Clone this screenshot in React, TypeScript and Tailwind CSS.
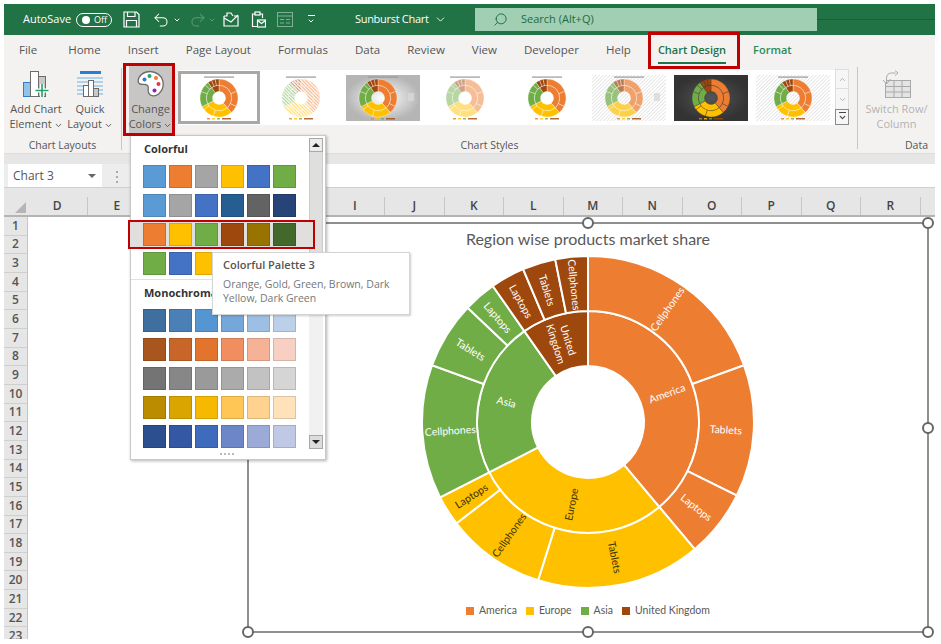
import { ChevronDown, Redo2, Search, Undo2 } from "lucide-react"

const tabs = ["File", "Home", "Insert", "Page Layout", "Formulas", "Data", "Review", "View", "Developer", "Help"]
const columns = ["D", "E", "F", "G", "H", "I", "J", "K", "L", "M", "N", "O", "P", "Q", "R"]
const rows = Array.from({ length: 23 }, (_, i) => i + 1)

const colorful = [
  ["#5B9BD5", "#ED7D31", "#A5A5A5", "#FFC000", "#4472C4", "#70AD47"],
  ["#5B9BD5", "#A5A5A5", "#4472C4", "#255E91", "#636363", "#264478"],
]
const hovered = ["#ED7D31", "#FFC000", "#70AD47", "#9E480E", "#997300", "#43682B"]
const lastColorful = ["#70AD47", "#4472C4", "#FFC000", "#43682B", "#255E91", "#997300"]
const mono = [
  ["#3f6f9f", "#4a80b5", "#5496d2", "#75a7db", "#9dbfe3", "#bdd0e9"],
  ["#a9561e", "#c8662a", "#e3742e", "#f08e60", "#f5b297", "#f8cfc3"],
  ["#747474", "#878787", "#9a9a9a", "#ababab", "#c2c2c2", "#d5d5d5"],
  ["#bb8c00", "#dba500", "#f6b900", "#ffc655", "#ffd38f", "#ffe1ba"],
  ["#2c4f8f", "#3458a3", "#3e6bbb", "#6c86c8", "#9caad8", "#bfc8e4"],
]

const ORANGE = "#ED7D31"
const GOLD = "#FFC000"
const GREEN = "#70AD47"
const BROWN = "#9E480E"

type Seg = { label: string; a0: number; a1: number; color: string; dark?: boolean }

const inner: Seg[] = [
  { label: "America", a0: 0, a1: 140, color: ORANGE },
  { label: "Europe", a0: 140, a1: 243, color: GOLD, dark: true },
  { label: "Asia", a0: 243, a1: 325, color: GREEN },
  { label: "United Kingdom", a0: 325, a1: 360, color: BROWN },
]
const outer: Seg[] = [
  { label: "Cellphones", a0: 0, a1: 70, color: ORANGE },
  { label: "Tablets", a0: 70, a1: 116.3, color: ORANGE },
  { label: "Laptops", a0: 116.3, a1: 140, color: ORANGE },
  { label: "Tablets", a0: 140, a1: 197.5, color: GOLD, dark: true },
  { label: "Cellphones", a0: 197.5, a1: 232.4, color: GOLD, dark: true },
  { label: "Laptops", a0: 232.4, a1: 243, color: GOLD, dark: true },
  { label: "Cellphones", a0: 243, a1: 290, color: GREEN },
  { label: "Tablets", a0: 290, a1: 313.5, color: GREEN },
  { label: "Laptops", a0: 313.5, a1: 325, color: GREEN },
  { label: "Laptops", a0: 325, a1: 337, color: BROWN },
  { label: "Tablets", a0: 337, a1: 348.6, color: BROWN },
  { label: "Cellphones", a0: 348.6, a1: 360, color: BROWN },
]

function polar(cx: number, cy: number, r: number, a: number) {
  const t = (a * Math.PI) / 180
  return [cx + r * Math.sin(t), cy - r * Math.cos(t)]
}

function wedge(cx: number, cy: number, r0: number, r1: number, a0: number, a1: number) {
  const [x0, y0] = polar(cx, cy, r1, a0)
  const [x1, y1] = polar(cx, cy, r1, a1)
  const [x2, y2] = polar(cx, cy, r0, a1)
  const [x3, y3] = polar(cx, cy, r0, a0)
  const large = a1 - a0 > 180 ? 1 : 0
  return `M${x0} ${y0}A${r1} ${r1} 0 ${large} 1 ${x1} ${y1}L${x2} ${y2}A${r0} ${r0} 0 ${large} 0 ${x3} ${y3}Z`
}

function SegLabel({ seg, r }: { seg: Seg; r: number }) {
  const mid = (seg.a0 + seg.a1) / 2
  const [x, y] = polar(168, 168, r, mid)
  let rot = mid - 90
  if (rot > 90) rot -= 180
  const fill = seg.dark ? "#3a3200" : "#ffffff"
  if (seg.label === "United Kingdom") {
    return (
      <text transform={`translate(${x} ${y}) rotate(${rot})`} textAnchor="middle" fontSize="10.5" fill={fill}>
        <tspan x="0" dy="-2">United</tspan>
        <tspan x="0" dy="13">Kingdom</tspan>
      </text>
    )
  }
  return (
    <text transform={`translate(${x} ${y}) rotate(${rot})`} textAnchor="middle" dominantBaseline="central" fontSize="10.5" fill={fill}>
      {seg.label}
    </text>
  )
}

function Sunburst() {
  return (
    <svg width="336" height="336" viewBox="0 0 336 336" className="font-['Lato',sans-serif] shrink-0">
      {[...inner.map((s) => ({ s, r0: 56, r1: 111 })), ...outer.map((s) => ({ s, r0: 111, r1: 166 }))].map(({ s, r0, r1 }, i) => (
        <path key={i} d={wedge(168, 168, r0, r1, s.a0, s.a1)} fill={s.color} stroke="#ffffff" strokeWidth="2" />
      ))}
      {inner.map((s) => (
        <SegLabel key={s.label} seg={s} r={84} />
      ))}
      {outer.map((s) => (
        <SegLabel key={s.label + s.a0} seg={s} r={138} />
      ))}
    </svg>
  )
}

type ThumbProps = {
  id: string
  bg: "white" | "stripes" | "gray" | "dark"
  pale?: number
  hatch?: boolean
  side?: boolean
}

function Thumb({ id, bg, pale = 0, hatch, side }: ThumbProps) {
  const cx = side ? 32 : 37
  const line = bg === "dark" ? "#3a3a3a" : "#ffffff"
  return (
    <svg width="74" height="46" viewBox="0 0 74 46" className="shrink-0">
      <defs>
        <pattern id={`bg-${id}`} width="2.5" height="2.5" patternUnits="userSpaceOnUse" patternTransform="rotate(45)">
          <rect width="2.5" height="2.5" fill="#ffffff" />
          <rect width="0.8" height="2.5" fill="#e2e2e2" />
        </pattern>
        <radialGradient id={`gray-${id}`}>
          <stop offset="0" stopColor={bg === "dark" ? "#555555" : "#ffffff"} />
          <stop offset="1" stopColor={bg === "dark" ? "#333333" : "#b5b5b5"} />
        </radialGradient>
        <pattern id={`hatch-${id}`} width="2.4" height="2.4" patternUnits="userSpaceOnUse" patternTransform="rotate(-45)">
          <rect width="1.2" height="2.4" fill="#ffffff" />
        </pattern>
      </defs>
      <rect
        width="74"
        height="46"
        fill={bg === "white" ? "#ffffff" : bg === "stripes" ? `url(#bg-${id})` : `url(#gray-${id})`}
      />
      {bg !== "dark" && <rect x="22" y="1.5" width="30" height="1.2" fill="#9a9a9a" />}
      {[...inner.map((s) => ({ s, r0: 6.5, r1: 12.7 })), ...outer.map((s) => ({ s, r0: 12.7, r1: 19 }))].map(({ s, r0, r1 }, i) => (
        <g key={i}>
          <path d={wedge(cx, 23, r0, r1, s.a0, s.a1)} fill={s.color} fillOpacity={1 - pale} stroke={line} strokeWidth="0.35" />
          {hatch && <path d={wedge(cx, 23, r0, r1, s.a0, s.a1)} fill={`url(#hatch-${id})`} />}
        </g>
      ))}
      <rect x="25" y="43.2" width="3" height="1.2" fill={ORANGE} />
      <rect x="30" y="43.2" width="3" height="1.2" fill={GOLD} />
      <rect x="35" y="43.2" width="3" height="1.2" fill={GREEN} />
      <rect x="40" y="43.2" width="9" height="1.2" fill={BROWN} />
      {side && <rect x="62" y="18" width="6" height="8" fill="#d8d8d8" fillOpacity="0.8" />}
    </svg>
  )
}

function AddChartIcon() {
  return (
    <svg width="28" height="28" viewBox="0 0 28 28" fill="none">
      <rect x="1.5" y="12.5" width="7" height="14" fill="#8fc3ea" stroke="#2b7cd3" />
      <rect x="8.5" y="1.5" width="8" height="25" fill="#fff" stroke="#6b6b6b" />
      <rect x="16.5" y="6.5" width="7" height="20" fill="#c8c8c8" stroke="#6b6b6b" />
      <path d="M20 14v13M13.5 20.5h13" stroke="#fff" strokeWidth="4" />
      <path d="M20 14v13M13.5 20.5h13" stroke="#21a366" strokeWidth="1.6" />
    </svg>
  )
}

function QuickLayoutIcon() {
  return (
    <svg width="28" height="28" viewBox="0 0 28 28" fill="none">
      <rect x="4" y="1" width="21" height="3" fill="#2b7cd3" />
      <path d="M1 8h26M1 12h26M1 16h26M1 20h26M1 24h26" stroke="#6fb0e4" strokeWidth="1" />
      <rect x="7.5" y="15.5" width="5" height="11" fill="#fff" stroke="#6b6b6b" />
      <rect x="12.5" y="10.5" width="5" height="16" fill="#fff" stroke="#6b6b6b" />
      <rect x="17.5" y="18.5" width="5" height="8" fill="#c8c8c8" stroke="#6b6b6b" />
    </svg>
  )
}

function PaletteIcon() {
  return (
    <svg width="28" height="28" viewBox="0 0 28 28" fill="none">
      <path
        d="M13 1.5C6 1.5 1.2 6.5 1.2 11c0 3 2.4 3.6 5 3.4 2.8-.2 4.6.4 5 2.6.4 2.4-.8 4.2.8 6.6 1.7 2.6 6.2 3.4 9.6.4 3.6-3.2 5.2-8.4 4.2-13-1.2-5.6-6.8-9.5-12.8-9.5Z"
        fill="#fff"
        stroke="#6b6b6b"
        strokeWidth="1.3"
      />
      <circle cx="7.5" cy="9.5" r="2" fill="#2b7cd3" />
      <circle cx="12.5" cy="6" r="2" fill="#21a366" />
      <circle cx="19" cy="8" r="2" fill="#ed7d31" />
      <circle cx="21.5" cy="14" r="2" fill="#e8344a" />
      <circle cx="17.5" cy="20.5" r="2" fill="#8e24aa" />
    </svg>
  )
}

function SwitchIcon() {
  return (
    <svg width="30" height="28" viewBox="0 0 30 28" fill="none" stroke="#a9a9a9">
      <rect x="3.5" y="10.5" width="25" height="17" fill="#e4e4e4" />
      <path d="M3.5 16.5h25M3.5 22h25M12 10.5v17M20 10.5v17" />
      <path d="M1 10l3.5 4 4-5M4.5 14V8c0-3 2-5 5-5h4M13 .5 16 3l-3 2.5" fill="#f3f2f1" />
    </svg>
  )
}

function FloppyIcon() {
  return (
    <svg width="17" height="17" viewBox="0 0 17 17" fill="none" stroke="#fff" strokeWidth="1.2">
      <path d="M1 1h12.5L16 3.5V16H1Z" />
      <path d="M4.5 1v4.5h7.5V1" />
      <path d="M3.5 16V9.5h10V16" />
    </svg>
  )
}

function MailBoxIcon() {
  return (
    <svg width="16" height="15" viewBox="0 0 16 15" fill="none" stroke="#fff" strokeWidth="1.2">
      <path d="M1 4v10h14V4h-4" />
      <path d="M1 4h3V1h4l2 3" />
      <path d="m1 6 7 4 7-7" />
    </svg>
  )
}

function ClipMailIcon() {
  return (
    <svg width="15" height="17" viewBox="0 0 15 17" fill="none" stroke="#fff" strokeWidth="1.2">
      <path d="M6 15.5H1.5V3h2.5M9 3h2.5v4" />
      <rect x="4" y="1" width="5" height="3" />
      <rect x="6.5" y="9" width="8" height="7" />
      <path d="m6.5 9.5 4 3 4-3" />
    </svg>
  )
}

function FormIcon() {
  return (
    <svg width="16" height="15" viewBox="0 0 16 15" fill="none" stroke="#7fae95" strokeWidth="1">
      <rect x="0.5" y="0.5" width="15" height="14" />
      <path d="M0.5 4h15M3 7.5h4M9 7.5h4M3 11h4M9 11h4" />
    </svg>
  )
}

function Swatch({ color }: { color: string }) {
  return <div className="w-[23px] h-[23px] shrink-0 border border-[#00000022]" style={{ backgroundColor: color }} />
}

function SwatchRow({ colors }: { colors: string[] }) {
  return (
    <div className="flex gap-[3px]">
      {colors.map((c, i) => (
        <Swatch key={i} color={c} />
      ))}
    </div>
  )
}

function Caret() {
  return <ChevronDown className="inline-block w-[9px] h-[9px] ml-[2px]" strokeWidth={2.5} />
}

function RibbonButton({ label1, label2, caret, className, children }: { label1: string; label2: string; caret?: boolean; className?: string; children: React.ReactNode }) {
  return (
    <div className={`flex flex-col items-center text-[11px] leading-[15px] ${className ?? ""}`}>
      <div className="h-[28px] mt-[5px] mb-[3px] flex items-center justify-center">{children}</div>
      <span className="whitespace-nowrap">{label1}</span>
      <span className="whitespace-nowrap">
        {label2}
        {caret && <Caret />}
      </span>
    </div>
  )
}

export default function App() {
  return (
    <div className="relative w-[941px] h-[644px] overflow-hidden bg-white pl-[4px] pr-[6px] pt-[4px] flex flex-col font-['Open_Sans',sans-serif]">
      {/* title bar */}
      <div className="h-[31px] shrink-0 bg-[#217346] flex items-center text-white text-[11px]">
        <span className="ml-[19px] w-[53px]">AutoSave</span>
        <div className="w-[36px] h-[14px] rounded-full border border-white flex items-center pl-[5px] gap-[4px]">
          <div className="w-[8px] h-[8px] rounded-full bg-white" />
          <span className="text-[9px] leading-none">Off</span>
        </div>
        <div className="ml-[11px] flex">
          <FloppyIcon />
        </div>
        <Undo2 className="ml-[11px] w-[20px] h-[18px]" strokeWidth={1.4} />
        <ChevronDown className="ml-[2px] w-[8px] h-[8px]" strokeWidth={3} />
        <Redo2 className="ml-[7px] w-[20px] h-[18px] text-[#5c9a79]" strokeWidth={1.4} />
        <ChevronDown className="w-[8px] h-[8px] text-[#5c9a79]" strokeWidth={3} />
        <div className="ml-[7px] flex">
          <MailBoxIcon />
        </div>
        <div className="ml-[12px] flex">
          <ClipMailIcon />
        </div>
        <div className="ml-[11px] flex">
          <FormIcon />
        </div>
        <div className="ml-[14px] w-[8px] flex flex-col items-center gap-[1px]">
          <div className="w-[7px] h-[1px] bg-white" />
          <ChevronDown className="w-[8px] h-[8px]" strokeWidth={3} />
        </div>
        <div className="ml-[40px] w-[120px] flex items-center gap-[5px] text-[11px] tracking-[-0.3px]">
          Sunburst Chart
          <ChevronDown className="w-[13px] h-[13px]" strokeWidth={1.6} />
        </div>
        <div className="w-[342px] h-[23px] bg-[#a0cfb4] flex items-center text-[#1e6b40]">
          <Search className="ml-[18px] w-[15px] h-[15px] -scale-x-100" strokeWidth={1.5} />
          <span className="ml-[13px] text-[11px]">Search (Alt+Q)</span>
        </div>
        <div className="flex-1 h-[1px] bg-[#1a5f39]" />
      </div>

      {/* tabs */}
      <div className="h-[30px] shrink-0 bg-[#f3f2f1] flex items-center gap-[27px] pl-[15px] text-[11.5px] text-[#555555]">
        {tabs.map((t) => (
          <span key={t} className={t === "File" ? "whitespace-nowrap mr-[4px]" : "whitespace-nowrap"}>{t}</span>
        ))}
        <span className="relative whitespace-nowrap font-semibold text-[11px] text-[#217346]">
          Chart Design
          <span className="absolute left-0 right-0 top-[20px] h-[2px] bg-[#217346]" />
        </span>
        <span className="whitespace-nowrap font-semibold text-[11px] text-[#2f8a5a]">Format</span>
      </div>

      {/* ribbon */}
      <div className="h-[88px] shrink-0 bg-[#f3f2f1] flex">
        <div className="w-[117px] flex flex-col">
          <div className="flex-1 flex pl-[6px] text-[#555555]">
            <RibbonButton label1="Add Chart" label2="Element" caret className="w-[52px]">
              <AddChartIcon />
            </RibbonButton>
            <RibbonButton label1="Quick" label2="Layout" caret className="ml-[6px] w-[44px]">
              <QuickLayoutIcon />
            </RibbonButton>
          </div>
          <div className="h-[17px] pt-[2px] text-center text-[10.5px] text-[#555555]">Chart Layouts</div>
        </div>
        <div className="w-[1px] h-[82px] mt-[3px] bg-[#c8c6c4]" />
        <div className="w-[735px] flex flex-col">
          <div className="flex-1 flex">
            <div className="ml-[7px] w-[43px] h-[70px] bg-[#c8c6c4] text-[#555555]">
              <RibbonButton label1="Change" label2="Colors" caret className="w-full">
                <PaletteIcon />
              </RibbonButton>
            </div>
            <div className="ml-[6px] mt-[5px] w-[657px] h-[55px] bg-white flex items-center">
              <div className="w-[82px] h-[53px] shrink-0 border-[3px] border-[#a8a8a8] flex items-center justify-center">
                <Thumb id="a" bg="white" />
              </div>
              <div className="w-[82px] shrink-0 flex justify-center">
                <Thumb id="b" bg="white" pale={0.45} hatch />
              </div>
              <div className="w-[82px] shrink-0 flex justify-center">
                <Thumb id="c" bg="gray" side />
              </div>
              <div className="w-[82px] shrink-0 flex justify-center">
                <Thumb id="d" bg="white" pale={0.5} />
              </div>
              <div className="w-[82px] shrink-0 flex justify-center">
                <Thumb id="e" bg="white" />
              </div>
              <div className="w-[82px] shrink-0 flex justify-center">
                <Thumb id="f" bg="stripes" pale={0.3} side />
              </div>
              <div className="w-[82px] shrink-0 flex justify-center">
                <Thumb id="g" bg="dark" />
              </div>
              <div className="w-[82px] shrink-0 flex justify-center">
                <Thumb id="h" bg="stripes" />
              </div>
            </div>
            <div className="mt-[4px] w-[14px] h-[56px] flex flex-col text-[#a0a0a0]">
              <div className="h-[20px] border border-[#dddddd] bg-[#f6f6f6] flex items-center justify-center">
                <ChevronDown className="w-[9px] h-[9px] rotate-180" />
              </div>
              <div className="h-[20px] border-x border-[#dddddd] bg-[#f6f6f6] flex items-center justify-center">
                <ChevronDown className="w-[9px] h-[9px]" />
              </div>
              <div className="h-[16px] border border-[#8a8a8a] bg-[#f6f6f6] flex flex-col items-center justify-center text-[#444444]">
                <div className="w-[7px] h-[1px] bg-[#444444]" />
                <ChevronDown className="w-[9px] h-[9px]" strokeWidth={3} />
              </div>
            </div>
          </div>
          <div className="h-[17px] pt-[2px] text-center text-[10.5px] text-[#555555]">Chart Styles</div>
        </div>
        <div className="w-[1px] h-[82px] mt-[2px] bg-[#c8c6c4]" />
        <div className="flex-1 flex flex-col">
          <div className="flex-1 flex justify-center text-[#b3b3b3]">
            <RibbonButton label1="Switch Row/" label2="Column" className="text-[10.5px]">
              <SwitchIcon />
            </RibbonButton>
          </div>
          <div className="h-[17px] pt-[2px] text-right pr-[7px] text-[10.5px] text-[#555555]">Data</div>
        </div>
      </div>

      {/* band under ribbon and formula bar */}
      <div className="h-[11px] shrink-0 bg-[#e6e6e6] border-t border-[#dcdcdc]" />
      <div className="h-[23px] shrink-0 bg-white flex">
        <div className="w-[130px] bg-[#ededed] flex">
          <div className="ml-[4px] w-[94px] bg-white flex items-center justify-between pl-[5px] pr-[6px] text-[12px] text-[#555555]">
            Chart 3
            <div className="w-0 h-0 border-x-[4px] border-x-transparent border-t-[4px] border-t-[#666666]" />
          </div>
          <div className="ml-[14px] mt-[7px] flex flex-col gap-[3px]">
            <div className="w-[2px] h-[2px] bg-[#aaaaaa]" />
            <div className="w-[2px] h-[2px] bg-[#aaaaaa]" />
            <div className="w-[2px] h-[2px] bg-[#aaaaaa]" />
          </div>
        </div>
      </div>

      {/* column headers */}
      <div className="h-[30px] shrink-0 bg-[#e6e6e6] border-t border-[#cfcfcf] border-b-2 border-b-[#b4b4b4] flex items-end overflow-hidden">
        <div className="w-[24px] h-full shrink-0 flex items-end justify-end pr-[2px] pb-[2px]">
          <div className="w-0 h-0 border-l-[11px] border-l-transparent border-b-[11px] border-b-[#b5b5b5]" />
        </div>
        {columns.map((c) => (
          <div key={c} className="w-[59.5px] h-[18px] shrink-0 border-r border-[#c6c6c6] flex items-center justify-center text-[12px] font-semibold text-[#444444]">
            {c}
          </div>
        ))}
      </div>

      {/* row headers */}
      <div className="flex-1 min-h-0 mb-[5px] flex overflow-hidden">
        <div className="w-[24px] shrink-0 bg-[#e6e6e6] border-r border-[#c6c6c6]">
          {rows.map((r) => (
            <div key={r} className="h-[18.66px] border-b border-[#cfcfcf] flex items-center justify-center text-[12px] font-semibold text-[#555555]">
              {r}
            </div>
          ))}
        </div>
        <div className="flex-1 bg-white" />
      </div>

      {/* chart object */}
      <div className="absolute left-[247px] top-[222px] w-[682px] h-[411px] border-2 border-[#8f8f8f] bg-white flex flex-col items-center">
        <div className="h-[30px] shrink-0 pt-[2px] text-[16px] leading-[26px] text-[#595959] font-['Lato',sans-serif]">
          Region wise products market share
        </div>
        <Sunburst />
        <div className="mt-[13px] flex items-center text-[10.5px] text-[#595959] font-['Lato',sans-serif]">
          <div className="w-[8px] h-[8px] bg-[#ED7D31] mr-[5px]" />
          <span className="mr-[9px]">America</span>
          <div className="w-[8px] h-[8px] bg-[#FFC000] mr-[5px]" />
          <span className="mr-[9px]">Europe</span>
          <div className="w-[8px] h-[8px] bg-[#70AD47] mr-[5px]" />
          <span className="mr-[9px]">Asia</span>
          <div className="w-[8px] h-[8px] bg-[#9E480E] mr-[5px]" />
          <span>United Kingdom</span>
        </div>
        <div className="absolute left-[-7px] top-[-7px] w-[12px] h-[12px] rounded-full border-2 border-[#666666] bg-white" />
        <div className="absolute left-[333px] top-[-7px] w-[12px] h-[12px] rounded-full border-2 border-[#666666] bg-white" />
        <div className="absolute right-[-7px] top-[-7px] w-[12px] h-[12px] rounded-full border-2 border-[#666666] bg-white" />
        <div className="absolute right-[-7px] top-[198px] w-[12px] h-[12px] rounded-full border-2 border-[#666666] bg-white" />
        <div className="absolute left-[-7px] bottom-[-7px] w-[12px] h-[12px] rounded-full border-2 border-[#666666] bg-white" />
        <div className="absolute left-[333px] bottom-[-7px] w-[12px] h-[12px] rounded-full border-2 border-[#666666] bg-white" />
        <div className="absolute right-[-7px] bottom-[-7px] w-[12px] h-[12px] rounded-full border-2 border-[#666666] bg-white" />
      </div>

      {/* change colors menu */}
      <div className="absolute left-[130px] top-[135px] w-[196px] h-[325px] bg-white border border-[#c8c8c8] shadow-[1px_1px_3px_rgba(0,0,0,0.3)] flex flex-col">
        <div className="flex-1 flex min-h-0">
          <div className="w-[178px] shrink-0 pl-[12px] pt-[4px]">
            <div className="h-[18px] text-[11px] leading-[18px] font-bold text-[#333333] mb-[7px] ml-[1px]">Colorful</div>
            <div className="flex flex-col gap-[6px]">
              {colorful.map((c, i) => (
                <SwatchRow key={i} colors={c} />
              ))}
              <div className="relative z-10 w-[187px] -ml-[15px] -my-[3px] pl-[13px] py-[1px] border-2 border-[#c00000] bg-[#e1dfdd]">
                <SwatchRow colors={hovered} />
              </div>
              <SwatchRow colors={lastColorful} />
            </div>
            <div className="h-[1px] bg-[#e0e0e0] mt-[4px] -ml-[12px]" />
            <div className="h-[18px] mt-[4px] ml-[1px] text-[11px] leading-[18px] font-bold text-[#333333] whitespace-nowrap">Monochromatic</div>
            <div className="mt-[7px] flex flex-col gap-[6px]">
              {mono.map((c, i) => (
                <SwatchRow key={i} colors={c} />
              ))}
            </div>
          </div>
          <div className="w-[14px] mt-[2px] bg-[#f1f1f1] flex flex-col">
            <div className="h-[14px] shrink-0 border border-[#a8a8a8] bg-[#ececec] flex items-center justify-center">
              <div className="w-0 h-0 border-x-[4px] border-x-transparent border-b-[4px] border-b-[#222222]" />
            </div>
            <div className="h-[126px] shrink-0 bg-[#dfdfdd] border-x border-b border-[#cccccc]" />
            <div className="flex-1" />
            <div className="h-[14px] shrink-0 border border-[#a8a8a8] bg-[#dcdcdc] flex items-center justify-center">
              <div className="w-0 h-0 border-x-[4px] border-x-transparent border-t-[4px] border-t-[#222222]" />
            </div>
          </div>
        </div>
        <div className="h-[10px] shrink-0 flex items-center justify-center gap-[2px] pr-[2px]">
          <div className="w-[2px] h-[2px] bg-[#b5bcc5]" />
          <div className="w-[2px] h-[2px] bg-[#b5bcc5]" />
          <div className="w-[2px] h-[2px] bg-[#b5bcc5]" />
          <div className="w-[2px] h-[2px] bg-[#b5bcc5]" />
        </div>
      </div>

      {/* tooltip */}
      <div className="absolute left-[212px] top-[252px] w-[198px] h-[63px] bg-white border border-[#d4d4d4] shadow-[1px_1px_2px_rgba(0,0,0,0.2)] pl-[10px] pt-[3px]">
        <div className="text-[11px] leading-[18px] font-semibold text-[#555555]">Colorful Palette 3</div>
        <div className="mt-[3px] text-[10.5px] leading-[14px] text-[#777777]">
          Orange, Gold, Green, Brown, Dark
          <br />
          Yellow, Dark Green
        </div>
      </div>

      {/* red callouts */}
      <div className="absolute left-[123px] top-[63px] w-[52px] h-[73px] border-[3px] border-[#c00000]" />
      <div className="absolute left-[648px] top-[32px] w-[92px] h-[37px] border-[3px] border-[#c00000]" />
    </div>
  )
}
